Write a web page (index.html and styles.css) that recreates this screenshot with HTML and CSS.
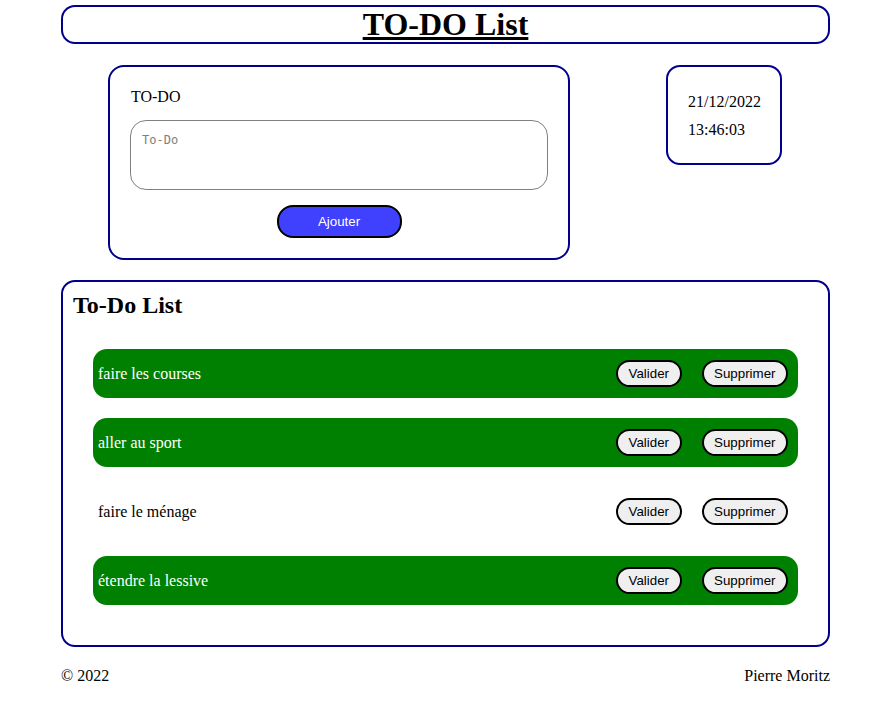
FILE: index.html
```html
<!DOCTYPE html>
<html lang="fr">
<head>
<meta charset="utf-8">
<title>TO-DO List</title>
<link rel="stylesheet" href="styles.css">
</head>
<body>
<div class="page">
  <header class="header">
    <h1 class="title">TO-DO List</h1>
  </header>

  <section class="top-row">
    <form class="form-card">
      <label class="form-label" for="todo">TO-DO</label>
      <textarea id="todo" class="todo-input" placeholder="To-Do"></textarea>
      <div class="form-actions">
        <button type="button" class="add-btn">Ajouter</button>
      </div>
    </form>
    <div class="date-card">
      <div class="date-line">21/12/2022</div>
      <div class="date-line">13:46:03</div>
    </div>
  </section>

  <section class="list-card">
    <h2 class="list-title">To-Do List</h2>
    <ul class="items">
      <li class="item done">
        <span class="item-text">faire les courses</span>
        <div class="item-actions">
          <button type="button" class="item-btn">Valider</button>
          <button type="button" class="item-btn">Supprimer</button>
        </div>
      </li>
      <li class="item done">
        <span class="item-text">aller au sport</span>
        <div class="item-actions">
          <button type="button" class="item-btn">Valider</button>
          <button type="button" class="item-btn">Supprimer</button>
        </div>
      </li>
      <li class="item">
        <span class="item-text">faire le ménage</span>
        <div class="item-actions">
          <button type="button" class="item-btn">Valider</button>
          <button type="button" class="item-btn">Supprimer</button>
        </div>
      </li>
      <li class="item done">
        <span class="item-text">étendre la lessive</span>
        <div class="item-actions">
          <button type="button" class="item-btn">Valider</button>
          <button type="button" class="item-btn">Supprimer</button>
        </div>
      </li>
    </ul>
  </section>

  <footer class="footer">
    <span>© 2022</span>
    <span>Pierre Moritz</span>
  </footer>
</div>
</body>
</html>
```

FILE: styles.css
```css
* {
  box-sizing: border-box;
}

body {
  margin: 5px 8px;
  font-family: "Liberation Serif", "Times New Roman", serif;
  font-size: 16px;
  color: #000;
  background: #fff;
}

.page {
  width: 769px;
  margin-left: 53px;
}

.header {
  border: 2px solid #00008b;
  border-radius: 14px;
  text-align: center;
}

.title {
  margin: 0;
  font-size: 32px;
  line-height: 35px;
  font-weight: bold;
  text-decoration: underline;
}

.top-row {
  display: flex;
  justify-content: space-between;
  align-items: flex-start;
  margin-top: 21px;
  padding: 0 48px 0 47px;
}

.form-card {
  width: 462px;
  border: 2px solid #00008b;
  border-radius: 16px;
  padding: 21px 20px 20px;
  margin: 0;
}

.form-label {
  display: block;
  padding-left: 1px;
  line-height: 18px;
  margin-bottom: 14px;
}

.todo-input {
  display: block;
  width: 100%;
  height: 70px;
  border: 1px solid #808080;
  border-radius: 16px;
  padding: 12px 11px;
  font-family: "DejaVu Sans Mono", "Liberation Mono", monospace;
  font-size: 12px;
  line-height: 14px;
  resize: none;
  outline: none;
}

.todo-input::placeholder {
  color: #808080;
}

.form-actions {
  display: flex;
  justify-content: center;
  margin-top: 15px;
}

.add-btn {
  width: 125px;
  height: 33px;
  background: #4040ff;
  color: #fff;
  border: 2px solid #000;
  border-radius: 16px;
  font-family: "Liberation Sans", Arial, sans-serif;
  font-size: 13.33px;
  padding: 0;
}

.date-card {
  width: 116px;
  height: 100px;
  border: 2px solid #00008b;
  border-radius: 14px;
  padding: 21px 18px 19px 20px;
}

.date-line {
  line-height: 28px;
  white-space: nowrap;
}

.list-card {
  margin-top: 20px;
  border: 2px solid #00008b;
  border-radius: 14px;
  padding: 10px 10px 40px;
}

.list-title {
  margin: 0 0 30px;
  font-size: 24px;
  line-height: 27px;
  font-weight: bold;
}

.items {
  list-style: none;
  margin: 0;
  padding: 0 20px;
  display: flex;
  flex-direction: column;
  gap: 20px;
}

.item {
  height: 49px;
  display: flex;
  align-items: center;
  justify-content: space-between;
  padding: 0 10px 0 5px;
  border-radius: 14px;
  background: #fff;
  color: #000;
}

.item.done {
  background: #008000;
  color: #fff;
}

.item-actions {
  display: flex;
  gap: 20px;
}

.item-btn {
  height: 27px;
  padding: 0 10.5px;
  background: #efefef;
  color: #000;
  border: 2px solid #000;
  border-radius: 14px;
  font-family: "Liberation Sans", Arial, sans-serif;
  font-size: 13.33px;
}

.footer {
  display: flex;
  justify-content: space-between;
  margin-top: 20px;
  line-height: 18px;
}
```
